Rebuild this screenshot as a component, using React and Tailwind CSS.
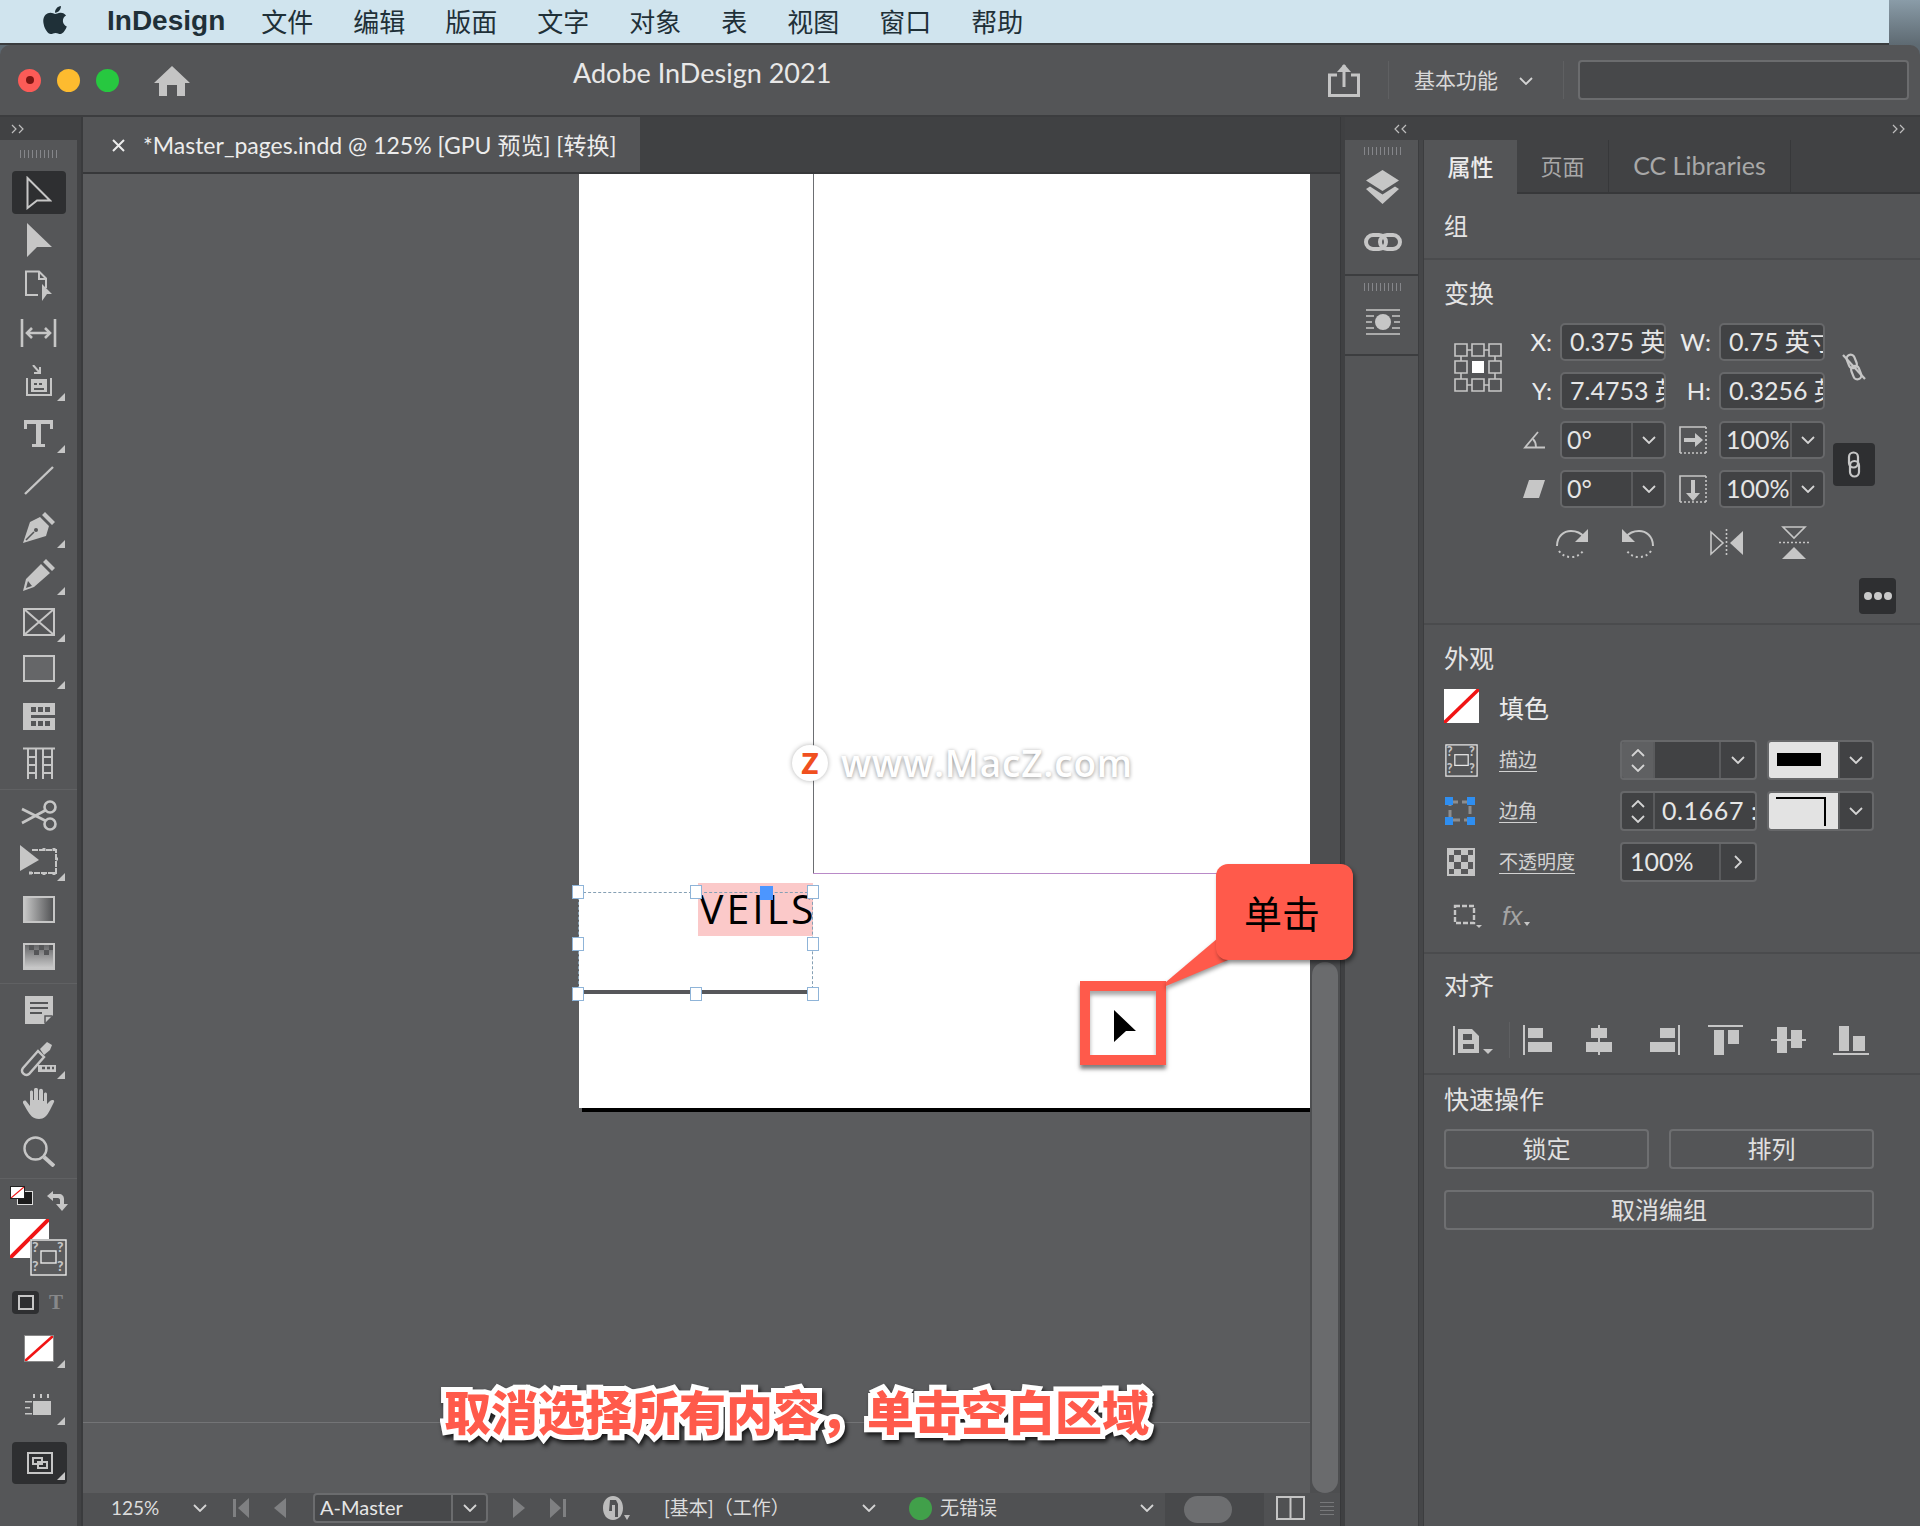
import React from "react";
import { FaApple } from "react-icons/fa";

const C = "#c6c6c6";

const Chevron = ({ className = "", color = "#d4d4d4" }) => (
  <svg viewBox="0 0 14 8" className={`w-[14px] h-[8px] ${className}`} fill="none" stroke={color} strokeWidth="1.8">
    <path d="M1 1l6 6 6-6" />
  </svg>
);

const Collapse = ({ left }) => (
  <svg width="13" height="10" viewBox="0 0 13 10" fill="none" stroke="#bdbdbd" strokeWidth="1.2">
    <path d={left ? "M5 1L1 5l4 4M12 1L8 5l4 4" : "M1 1l4 4-4 4M8 1l4 4-4 4"} />
  </svg>
);

const Gripper = ({ className = "" }) => (
  <div className={`h-[8px] w-[38px] bg-[repeating-linear-gradient(90deg,#85868a_0_1px,transparent_1px_4px)] ${className}`}></div>
);

// little flyout triangle on the tool buttons
const More = () => (
  <svg viewBox="0 0 8 8" className="absolute left-[57px] top-1/2 mt-[12px] w-[8px] h-[8px]" fill={C}>
    <path d="M8 0v8H0z" />
  </svg>
);

const Tool = ({ cls, more, active, children }) => (
  <div className={`relative flex items-center justify-center ${cls}`}>
    {active && <div className="absolute left-[12px] top-[2.5px] w-[54px] h-[43px] rounded bg-[#2e2f31]"></div>}
    <div className="relative flex">{children}</div>
    {more && <More />}
  </div>
);

const Svg = ({ w, h, children, fill = C, stroke = "none", sw = 2 }) => (
  <svg width={w} height={h} viewBox={`0 0 ${w} ${h}`} fill={fill} stroke={stroke} strokeWidth={sw}>
    {children}
  </svg>
);

const Segment = ({ children, className = "" }) => (
  <div className={`flex h-[38px] rounded-[5px] border-2 border-[#67686a] bg-[#414244] overflow-hidden ${className}`}>{children}</div>
);

const TextInput = ({ children }) => (
  <Segment className="items-center pl-[8px] text-[25px] text-[#e6e6e6] whitespace-nowrap">{children}</Segment>
);

const DropInput = ({ children }) => (
  <Segment>
    <div className="flex-1 pl-[5px] text-[25px] leading-[33px] text-[#e6e6e6]">{children}</div>
    <div className="w-[33px] border-l-2 border-[#5a5b5d] flex items-center justify-center">
      <Chevron />
    </div>
  </Segment>
);

const Label = ({ children }) => <div className="text-right text-[24px] leading-[38px] text-[#ececec]">{children}</div>;

const Stepper = ({ dim }) => (
  <div className={`w-[33px] h-full flex flex-col items-center justify-center gap-[7px] border-r-2 border-[#5a5b5d] ${dim ? "bg-[#5f6062]" : ""}`}>
    <Chevron className="rotate-180" />
    <Chevron />
  </div>
);

const SwatchDrop = ({ children }) => (
  <div className="ml-[10px] flex w-[107px] h-[40px] rounded-[4px] border-2 border-[#67686a] bg-[#414244] overflow-hidden">
    <div className="w-[69px] bg-[#e3e3e3] flex items-center justify-center relative">{children}</div>
    <div className="flex-1 flex items-center justify-center border-l-2 border-[#5a5b5d]">
      <Chevron />
    </div>
  </div>
);

const Title = ({ children }) => <div className="text-[25px] leading-[26px] text-[#e4e4e4]">{children}</div>;

const NoneSwatch = ({ className }) => (
  <svg viewBox="0 0 40 40" preserveAspectRatio="none" className={className}>
    <rect width="40" height="40" fill="#fff" />
    <path d="M0 40L40 0" stroke="#f01414" strokeWidth="4" />
  </svg>
);

const StrokeBox = ({ w, h }) => (
  <svg width={w} height={h} viewBox="0 0 37 37">
    <rect x="1" y="1" width="35" height="35" fill="none" stroke="#e8e8e8" strokeWidth="1.4" />
    <rect x="11" y="12" width="15" height="12" fill="#5a5b5d" stroke="#e8e8e8" strokeWidth="1.4" />
    <text x="2" y="13" fontSize="14" fontWeight="900" fill="#c4c4c4">?</text>
    <text x="27" y="13" fontSize="14" fontWeight="900" fill="#c4c4c4">?</text>
    <text x="2" y="32" fontSize="14" fontWeight="900" fill="#c4c4c4">?</text>
    <text x="27" y="32" fontSize="14" fontWeight="900" fill="#c4c4c4">?</text>
  </svg>
);

const Handle = ({ className }) => (
  <div className={`absolute w-[12px] h-[14px] bg-white border border-[#8fb4d8] ${className}`}></div>
);

const MENU = ["文件", "编辑", "版面", "文字", "对象", "表", "视图", "窗口", "帮助"];

const App = () => {
  return (
    <div className="relative w-[1920px] h-[1526px] overflow-hidden flex flex-col bg-[#5e6a72] font-['Lato','Noto_Sans_CJK_SC',sans-serif]">
      {/* Mac menu bar */}
      <div className="h-[45px] shrink-0 flex bg-[#3a3c3e]">
        <div className="flex-1 h-[43px] bg-[#d0e4ee] flex items-center pb-[2px] pl-[40px] text-[#1f3038]">
          <FaApple className="w-[30px] h-[32px] text-[#1f3038] -mt-[2px]" />
          <span className="ml-[37px] mr-[36px] text-[28px] font-bold font-['Liberation_Sans',sans-serif]">InDesign</span>
          <div className="flex gap-[40px] text-[26px] font-['Noto_Sans_CJK_SC',sans-serif]">
            {MENU.map((m) => (
              <span key={m}>{m}</span>
            ))}
          </div>
        </div>
        <div className="w-[31px] h-[45px] bg-gradient-to-b from-[#8a9ca8] to-[#5e6a72]"></div>
      </div>

      <div className="flex-1 flex flex-col rounded-t-[10px] overflow-hidden bg-[#545557]">
        {/* Title bar */}
        <div className="h-[72px] shrink-0 flex items-center border-b-2 border-[#3c3d3f] relative">
          <div className="ml-[18px] w-[23px] h-[23px] rounded-full bg-[#fc5b57] flex items-center justify-center">
            <div className="w-[8px] h-[8px] rounded-full bg-[#7d1512]"></div>
          </div>
          <div className="ml-[16px] w-[23px] h-[23px] rounded-full bg-[#fdbb2f]"></div>
          <div className="ml-[16px] w-[23px] h-[23px] rounded-full bg-[#27c840]"></div>
          <svg viewBox="0 0 36 30" className="ml-[35px] w-[36px] h-[30px] mt-[2px]" fill="#c4c4c4">
            <path d="M18 0L36 17h-5v13h-8V19H13v11H5V17H0z" />
          </svg>
          <div className="ml-[383px] -mt-[14px] text-[27px] text-[#e8e8e8]">Adobe InDesign 2021</div>
          <div className="ml-auto flex items-center">
            <svg width="32" height="34" viewBox="0 0 32 34" fill="none" stroke="#c4c4c4" strokeWidth="3">
              <path d="M9 12H1.5v20.5h29V12H23M16 24V2" />
              <path d="M9 9l7-8 7 8z" fill="#c4c4c4" stroke="none" />
            </svg>
            <div className="ml-[28px] w-[1px] h-[38px] bg-[#5f6062]"></div>
            <span className="ml-[25px] text-[21px] text-[#d8d8d8]">基本功能</span>
            <Chevron className="ml-[21px] mt-[2px]" />
            <div className="ml-[30px] w-[1px] h-[38px] bg-[#5f6062]"></div>
            <div className="ml-[14px] mr-[11px] w-[331px] h-[40px] rounded-[4px] border-2 border-[#6b6c6e] bg-[#47484a]"></div>
          </div>
        </div>

        <div className="flex-1 flex min-h-0">
          {/* Left tools */}
          <div className="w-[77px] shrink-0 flex flex-col bg-[#555658]">
            <div className="h-[23px] shrink-0 bg-[#414244] pl-[11px] flex items-center">
              <Collapse />
            </div>
            <div className="h-[28.5px] shrink-0 flex items-center justify-center">
              <Gripper />
            </div>
            <Tool cls="h-[48px]" active>
              <Svg w={26} h={34} fill="none" stroke={C}><path d="M1.5 2L24 24.5H11L1.5 32z" /></Svg>
            </Tool>
            <Tool cls="h-[47px]">
              <Svg w={26} h={34}><path d="M1 0l25 24H11L1 34z" /></Svg>
            </Tool>
            <Tool cls="h-[45px]">
              <Svg w={29} h={32} fill="none" stroke={C}><path d="M14 25H2V1.5h13l7 7V18M15 2v7h7" /><path d="M18 14l10 10h-5l-5 7z" fill={C} stroke="none" /></Svg>
            </Tool>
            <Tool cls="h-[49px]">
              <Svg w={37} h={28} fill="none" stroke={C} sw={2.6}><path d="M2 0v28M35 0v28M8 14h21" /><path d="M12 9l-5 5 5 5M25 9l5 5-5 5" /></Svg>
            </Tool>
            <Tool cls="h-[47px]" more>
              <Svg w={28} h={32} fill="none" stroke={C}><path d="M8 0l7 8M15 2v6H9" /><path d="M2 13v17h24V13" /><path d="M6 14h16v13H6z" fill={C} stroke="none" /><path d="M9 19h3M14 19h3M9 24h10" stroke="#555658" /></Svg>
            </Tool>
            <Tool cls="h-[57px]" more>
              <Svg w={29} h={27}><path d="M0 0h29v9h-3V4H17v20h4v3H8v-3h4V4H3v5H0z" /></Svg>
            </Tool>
            <Tool cls="h-[38px]">
              <Svg w={30} h={29} fill="none" stroke={C} sw={2.4}><path d="M1 28L29 1" /></Svg>
            </Tool>
            <Tool cls="h-[56px]" more>
              <Svg w={32} h={31}><path d="M22 0l10 10-3 3-10-10zM17 5l9 9-3 10L0 31l7-21z" /><path d="M3 28l8-8" stroke="#555658" strokeWidth="1.6" /><circle cx="13" cy="18" r="2" fill="#555658" /></Svg>
            </Tool>
            <Tool cls="h-[39px]" more>
              <Svg w={32} h={32}><path d="M23 0l9 9-3 3-9-9zM18 5l9 9-16 14-11 4 3-12z" /><path d="M3 29l6-2-4-5z" fill="#555658" /></Svg>
            </Tool>
            <Tool cls="h-[55px]" more>
              <Svg w={32} h={28} fill="none" stroke={C}><path d="M1 1h30v26H1zM1 1l30 26M31 1L1 27" /></Svg>
            </Tool>
            <Tool cls="h-[38px]" more>
              <Svg w={32} h={27} fill="#656668" stroke={C}><path d="M1 1h30v25H1z" /></Svg>
            </Tool>
            <Tool cls="h-[58px]">
              <Svg w={32} h={27}>
                <path d="M0 0h32v27H0z" />
                <path d="M8 4h5v5H8zM15 4h5v5h-5zM22 4h5v5h-5zM8 18h5v5H8zM15 18h5v5h-5zM22 18h5v5h-5zM8 12h24v3H8z" fill="#555658" />
              </Svg>
            </Tool>
            <Tool cls="h-[35px]">
              <Svg w={32} h={32} fill="none" stroke={C}><path d="M0 1.5h32M5 1v31M13 1v31M20 1v31M29 1v31M5 10h8M5 18h8M5 26h8M20 10h9M20 18h9M20 26h9" /></Svg>
            </Tool>
            <div className="h-[9px] shrink-0 border-b border-[#606163]"></div>
            <Tool cls="h-[51px]">
              <Svg w={36} h={31} fill="none" stroke={C} sw={2.6}><circle cx="29" cy="7" r="5.5" /><circle cx="29" cy="24" r="5.5" /><path d="M25 10L1 23M25 21L1 9" /></Svg>
            </Tool>
            <Tool cls="h-[41px]" more>
              <Svg w={38} h={32} fill="none" stroke={C}>
                <path d="M12 5h24v23H12" strokeDasharray="6 1" />
                <path d="M9 28h3M34 3v3M34 27v3M24 3v3M24 27v3M36 14h2" strokeWidth="3" />
                <path d="M0 0l19 15L0 26z" fill={C} stroke="none" />
              </Svg>
            </Tool>
            <Tool cls="h-[55px]">
              <svg width="32" height="27" viewBox="0 0 32 27">
                <defs>
                  <linearGradient id="gr1">
                    <stop offset="0" stopColor="#c8c8c8" />
                    <stop offset="1" stopColor="#4e4f51" />
                  </linearGradient>
                </defs>
                <rect x="1" y="1" width="30" height="25" fill="url(#gr1)" stroke={C} strokeWidth="2" />
              </svg>
            </Tool>
            <Tool cls="h-[39px]">
              <svg width="32" height="27" viewBox="0 0 32 27">
                <defs>
                  <linearGradient id="gr2" x1="0" y1="1" x2="0" y2="0">
                    <stop offset="0" stopColor="#cdcdcd" />
                    <stop offset="1" stopColor="#626365" />
                  </linearGradient>
                </defs>
                <rect x="1" y="1" width="30" height="25" fill="url(#gr2)" stroke={C} strokeWidth="2" />
                <path d="M6 2h5v5H6zM16 2h5v5h-5zM26 2h4v5h-4zM11 7h5v5h-5zM21 7h5v5h-5z" fill="#555658" />
              </svg>
            </Tool>
            <div className="h-[8px] shrink-0 border-b border-[#606163]"></div>
            <Tool cls="h-[52px]">
              <Svg w={28} h={28}><path d="M0 0h28v19l-9 9H0z" /><path d="M5 7h18M5 12h18M5 17h12" stroke="#555658" strokeWidth="2" /><path d="M20 27v-7h7" stroke="#555658" strokeWidth="1.5" fill="none" /></Svg>
            </Tool>
            <Tool cls="h-[46px]" more>
              <Svg w={38} h={36} fill="none" stroke={C} sw={2.4}><path d="M3 27L18 10l6 6L9 33c-4 3-9-2-6-6z" /><path d="M20 8l7-7 5 3-2 5-6 5z" fill={C} stroke="none" /><path d="M18 24h18v7H18z" fill={C} stroke="none" /><path d="M22 27h3M27 27h3M32 27h2" stroke="#555658" /></Svg>
            </Tool>
            <Tool cls="h-[43px]">
              <Svg w={32} h={31}><path d="M16 31c-6 0-9-4-12-9L0 15c-1-2 2-3 3-2l4 5 0-14c0-2 3-2 3 0v8h1V2c0-3 4-3 4 0v10h1V3c0-3 4-3 4 0v10h1V6c0-2 3-2 3 0v10l3-3c2-2 5-1 4 1l-4 8c-3 6-6 9-11 9z" /></Svg>
            </Tool>
            <Tool cls="h-[53px]">
              <Svg w={32} h={31} fill="none" stroke={C} sw={2.4}><circle cx="12.5" cy="12.5" r="11" /><path d="M21 21l10 9" strokeWidth="4" /></Svg>
            </Tool>
            <div className="h-[1px] shrink-0 bg-[#606163]"></div>

            {/* fill and stroke swatches overlap each other */}
            <div className="relative h-[101px] shrink-0">
              <div className="absolute left-[17px] top-[12px] w-[16px] h-[14px] bg-[#1b1b1b] border border-[#ddd]"></div>
              <div className="absolute left-[10px] top-[7px] w-[15px] h-[13px] border border-[#222]">
                <NoneSwatch className="w-full h-full" />
              </div>
              <svg className="absolute left-[47px] top-[12px]" width="21" height="21" viewBox="0 0 21 21" fill={C}>
                <path d="M0 5l6-5v3h6c3 0 5 2 5 5v5h4l-6 7-6-7h4V9c0-1-1-2-2-2H6v3z" />
              </svg>
              <NoneSwatch className="absolute left-[10px] top-[40px] w-[39px] h-[39px]" />
              <div className="absolute left-[30px] top-[60px] bg-[#5a5b5d]">
                <StrokeBox w={37} h={37} />
              </div>
            </div>
            <div className="mt-[11px] h-[23px] shrink-0 flex items-center">
              <div className="ml-[12px] w-[27px] h-[23px] rounded bg-[#2e2f31] flex items-center justify-center">
                <div className="w-[16px] h-[15px] border-2 border-[#c6c6c6]"></div>
              </div>
              <span className="ml-[10px] text-[21px] leading-[21px] font-bold text-[#87888a] font-['Liberation_Serif',serif]">T</span>
            </div>
            <Tool cls="h-[69px]" more>
              <NoneSwatch className="w-[30px] h-[27px] border border-[#888]" />
            </Tool>
            <Tool cls="h-[45px]" more>
              <Svg w={27} h={22}><path d="M8 7h18v14H8zM0 7h7v1.5H0zM0 13h5v1.5H0zM0 19h7v1.5H0zM8 0h2v4H8zM15 0h2v4h-2zM22 0h2v4h-2z" /></Svg>
            </Tool>
            <div className="mt-[14px] ml-[12px] relative w-[55px] h-[42px] rounded bg-[#2e2f31] flex items-center justify-center">
              <Svg w={26} h={22} fill="none" stroke={C}><path d="M1 1h24v20H1zM6 6h9v6H6zM11 10h9v6h-9z" /></Svg>
              <svg viewBox="0 0 8 8" className="absolute right-[2px] bottom-[4px] w-[8px] h-[8px]" fill={C}><path d="M8 0v8H0z" /></svg>
            </div>
          </div>
          <div className="w-[6px] shrink-0 bg-[#414244] border-r-2 border-[#3a3b3d]"></div>

          {/* Document area */}
          <div className="w-[1257px] shrink-0 flex flex-col">
            <div className="h-[57px] shrink-0 flex bg-[#404143] border-b-2 border-[#37383a]">
              <div className="w-[557px] bg-[#535456] flex items-center pt-[2px] text-[23px] text-[#ececec]">
                <svg className="ml-[29px]" width="13" height="13" viewBox="0 0 13 13" stroke="#ececec" strokeWidth="2"><path d="M1 1l11 11M12 1L1 12" /></svg>
                <span className="ml-[18px]">*Master_pages.indd @ 125% [GPU 预览] [转换]</span>
              </div>
            </div>
            <div className="flex-1 flex min-h-0">
              <div className="relative flex-1 bg-[#5b5c5e] overflow-hidden">
                {/* page */}
                <div className="absolute left-[496px] top-0 w-[731px] h-[934px] bg-white shadow-[3px_4px_0_#000]">
                  <div className="absolute left-[234px] top-0 w-[1px] h-[699px] bg-[#6c6e72]"></div>
                  <div className="absolute left-[234px] top-[699px] right-0 h-[1px] bg-[#b98ac8]"></div>

                  <div className="absolute left-[119px] top-[709px] w-[115px] h-[53px] bg-[#fbc9c9]"></div>
                  <div className="absolute left-[120px] top-[706px] text-[41px] leading-[56px] tracking-[3px] text-black font-['Open_Sans',sans-serif]">VEILS</div>

                  {/* selection */}
                  <div className="absolute left-[-1px] top-[718px] w-[235px] h-[102px] border border-dashed border-[#86a0b4]"></div>
                  <div className="absolute left-[-1px] top-[816px] w-[235px] h-[4px] bg-[#56575a]"></div>
                  <Handle className="left-[-7px] top-[711px]" />
                  <Handle className="left-[111px] top-[711px]" />
                  <Handle className="left-[228px] top-[711px]" />
                  <Handle className="left-[-7px] top-[763px]" />
                  <Handle className="left-[228px] top-[763px]" />
                  <Handle className="left-[-7px] top-[813px]" />
                  <Handle className="left-[111px] top-[813px]" />
                  <Handle className="left-[228px] top-[813px]" />
                  <div className="absolute left-[181px] top-[712px] w-[13px] h-[14px] bg-[#4c96ff]"></div>
                </div>

                {/* watermark */}
                <div className="absolute left-[709px] top-[569px] flex items-center">
                  <div className="w-[36px] h-[36px] rounded-full bg-white shadow-[0_0_5px_rgba(0,0,0,0.3)] flex items-center justify-center text-[28px] font-extrabold leading-none text-[#f0501f]">Z</div>
                  <span className="ml-[13px] text-[37px] leading-[40px] font-semibold tracking-[0.8px] text-white [text-shadow:0_1px_4px_rgba(0,0,0,0.45)] font-['Open_Sans',sans-serif]">www.MacZ.com</span>
                </div>

                <div className="absolute left-0 right-0 top-[1248px] h-[1px] bg-[#737476]"></div>
              </div>
              {/* scrollbar */}
              <div className="w-[30px] shrink-0 flex flex-col bg-[#4d4e50] pt-[788px]">
                <div className="ml-[2px] w-[26px] h-[531px] rounded-full bg-[#6a6b6d]"></div>
              </div>
            </div>
            {/* Status bar */}
            <div className="h-[33px] shrink-0 flex items-center pb-[3px] bg-[#505153] text-[#dcdcdc]">
              <span className="ml-[28px] w-[82px] text-[19px] leading-[26px]">125%</span>
              <Chevron />
              <svg className="ml-[26px]" width="16" height="20" viewBox="0 0 16 20" fill="#7f8082"><path d="M0 1h3v18H0zM16 0v20L5 10z" /></svg>
              <svg className="ml-[25px]" width="12" height="20" viewBox="0 0 12 20" fill="#7f8082"><path d="M12 0v20L0 10z" /></svg>
              <div className="ml-[27px] w-[175px] h-[30px] flex rounded-[4px] border-2 border-[#6b6c6e] bg-[#47484a]">
                <span className="ml-[5px] flex-1 text-[20px] leading-[24px] text-[#e6e6e6]">A-Master</span>
                <div className="w-[35px] border-l-2 border-[#6b6c6e] flex items-center justify-center">
                  <Chevron />
                </div>
              </div>
              <svg className="ml-[25px]" width="12" height="20" viewBox="0 0 12 20" fill="#7f8082"><path d="M0 0v20l12-10z" /></svg>
              <svg className="ml-[25px]" width="16" height="20" viewBox="0 0 16 20" fill="#7f8082"><path d="M13 1h3v18h-3zM0 0v20l11-10z" /></svg>
              <svg className="ml-[36px]" width="28" height="26" viewBox="0 0 28 26" fill="#bcbcbc"><path d="M11 1C5 1 1 6 1 13s4 12 10 12 10-5 10-12S17 1 11 1zM8 5h6l2 4v13h-3V10h-3v6H7z" fillRule="evenodd" /><path d="M22 20h6l-3 5z" /></svg>
              <span className="ml-[34px] w-[198px] text-[19px] leading-[26px] text-[#dcdcdc]">[基本]（工作）</span>
              <Chevron />
              <div className="ml-[33px] w-[23px] h-[23px] rounded-full bg-[#41a04a]"></div>
              <span className="ml-[8px] w-[200px] text-[19px] leading-[26px]">无错误</span>
              <Chevron />
              <div className="ml-[11px] w-[99px] h-[33px] -mb-[3px] bg-[#48494b] flex items-center">
                <div className="ml-[19px] w-[48px] h-[27px] rounded-full bg-[#6d6e70]"></div>
              </div>
              <svg className="ml-[12px]" width="29" height="24" viewBox="0 0 29 24" fill="none" stroke="#c4c4c4" strokeWidth="2"><path d="M1 1h27v22H1zM14.5 1v22" /></svg>
              <div className="ml-[15px] w-[14px] h-[14px] bg-[repeating-linear-gradient(0deg,#77787a_0_1px,transparent_1px_4px)]"></div>
            </div>
          </div>

          <div className="w-[5px] shrink-0 bg-[#3f4042] border-l border-[#37383a]"></div>

          {/* Right dock */}
          <div className="flex-1 flex flex-col min-w-0">
            <div className="h-[23px] shrink-0 flex justify-between items-center bg-[#414244] pl-[49px] pr-[15px]">
              <Collapse left />
              <Collapse />
            </div>
            <div className="flex-1 flex min-h-0">
              {/* Icon strip */}
              <div className="w-[73px] shrink-0 flex flex-col">
                <div className="h-[136px] pl-[2px] border-b-2 border-[#3c3d3f] flex flex-col items-center">
                  <Gripper className="mt-[7px]" />
                  <svg className="mt-[15px]" width="33" height="34" viewBox="0 0 33 34" fill={C}><path d="M16.5 0L33 10.5 16.5 21 0 10.5zM0 19l4-2.5 12.5 8 12.5-8 4 2.5-16.5 15z" /></svg>
                  <svg className="mt-[29px]" width="38" height="18" viewBox="0 0 38 18" fill="none" stroke={C} strokeWidth="4"><rect x="2" y="2" width="20" height="14" rx="7" /><rect x="16" y="2" width="20" height="14" rx="7" /></svg>
                </div>
                <div className="h-[80px] pl-[2px] border-b-2 border-[#3c3d3f] flex flex-col items-center">
                  <Gripper className="mt-[7px]" />
                  <svg className="mt-[18px]" width="34" height="26" viewBox="0 0 34 26" stroke={C} strokeWidth="1.4" fill="none"><path d="M0 1h34M0 7h8M26 7h8M0 13h6M28 13h6M0 19h8M26 19h8M0 25h34" /><circle cx="17" cy="13" r="8" fill={C} stroke="none" /></svg>
                </div>
              </div>
              <div className="w-[6px] shrink-0 bg-[#454648] border-x border-[#3c3d3f]"></div>

              {/* Properties panel */}
              <div className="flex-1 min-w-0 flex flex-col bg-[#545557]">
                <div className="h-[54px] shrink-0 flex bg-[#414244] border-b-2 border-[#37383a]">
                  <div className="w-[93px] -mb-[2px] bg-[#545557] flex items-center justify-center text-[23px] font-medium text-[#ececec]">属性</div>
                  <div className="w-[92px] flex items-center justify-center border-r border-[#37383a] text-[22px] text-[#a8a8a8]">页面</div>
                  <div className="w-[182px] flex items-center justify-center border-r border-[#37383a] text-[25px] text-[#a8a8a8]">CC Libraries</div>
                </div>
                <div className="h-[66px] shrink-0 flex items-center pl-[20px] border-b-2 border-[#4a4b4d] text-[24px] text-[#e4e4e4]">组</div>

                {/* Transform */}
                <div className="h-[365px] shrink-0 pl-[20px] pt-[20px] border-b-2 border-[#4a4b4d]">
                  <Title>变换</Title>
                  <div className="mt-[17px] flex">
                    <svg className="ml-[10px] mt-[20px] shrink-0" width="48" height="49" viewBox="0 0 48 49" fill="none" stroke={C} strokeWidth="1.6">
                      <path d="M1 1h12v12H1zM18 1h12v12H18zM35 1h12v12H35zM1 18h12v12H1zM35 18h12v12H35zM1 36h12v12H1zM18 36h12v12H18zM35 36h12v12H35z" />
                      <path d="M13 7h5M30 7h5M13 42h5M30 42h5M7 13v5M7 30v6M41 13v5M41 30v6" />
                      <rect x="18" y="18" width="12" height="12" fill="#fff" stroke="none" />
                    </svg>
                    <div className="grid grid-cols-[50px_106px_37px_106px_42px] auto-rows-[38px] gap-x-[8px] gap-y-[11px]">
                      <Label>X:</Label>
                      <TextInput>0.375 英</TextInput>
                      <Label>W:</Label>
                      <TextInput>0.75 英寸</TextInput>
                      <div className="row-span-2 flex items-center justify-center">
                        <svg width="26" height="30" viewBox="0 0 26 30" fill="none" stroke={C} strokeWidth="2.2">
                          <g transform="rotate(-22 13 15)">
                            <rect x="9" y="2" width="8" height="14" rx="4" />
                            <rect x="9" y="14" width="8" height="14" rx="4" />
                          </g>
                          <path d="M2 3l22 24" />
                        </svg>
                      </div>
                      <Label>Y:</Label>
                      <TextInput>7.4753 英</TextInput>
                      <Label>H:</Label>
                      <TextInput>0.3256 英</TextInput>
                      <div className="flex items-center justify-end pr-[7px]">
                        <svg width="22" height="18" viewBox="0 0 22 18" fill="none" stroke={C} strokeWidth="1.8"><path d="M15 1L2 16.500h20" /><path d="M10 8c2 2 3 5 3 8" /></svg>
                      </div>
                      <DropInput>0°</DropInput>
                      <div className="flex items-center justify-center">
                        <svg width="28" height="28" viewBox="0 0 28 28" fill="none" stroke={C} strokeWidth="1.6"><path d="M27 1H1v26" /><path d="M27 27V1" strokeDasharray="2 2" /><path d="M1 27h26" strokeDasharray="2 2" /><path d="M5 12h11V7l8 7-8 7v-5H5z" fill={C} stroke="none" /></svg>
                      </div>
                      <DropInput>100%</DropInput>
                      <div className="row-span-2 flex items-center justify-center">
                        <div className="w-[42px] h-[43px] rounded bg-[#2e2f31] flex items-center justify-center">
                          <svg width="14" height="27" viewBox="0 0 14 27" fill="none" stroke={C} strokeWidth="2.2"><rect x="2" y="1.500" width="9" height="15" rx="4.500" /><rect x="3" y="10" width="9" height="15.500" rx="4.500" /></svg>
                        </div>
                      </div>
                      <div className="flex items-center justify-end pr-[7px]">
                        <svg width="22" height="18" viewBox="0 0 22 18" fill={C}><path d="M6 0h16l-6 18H0z" /></svg>
                      </div>
                      <DropInput>0°</DropInput>
                      <div className="flex items-center justify-center">
                        <svg width="28" height="28" viewBox="0 0 28 28" fill="none" stroke={C} strokeWidth="1.6"><path d="M1 27V1h26" /><path d="M27 1v26" strokeDasharray="2 2" /><path d="M1 27h26" strokeDasharray="2 2" /><path d="M12 5h4v13h5l-7 8-7-8h5z" fill={C} stroke="none" /></svg>
                      </div>
                      <DropInput>100%</DropInput>
                    </div>
                  </div>
                  <div className="mt-[19px] flex items-center h-[31px] text-[0px]">
                    <svg className="ml-[112px]" width="32" height="31" viewBox="0 0 32 31" fill="none" stroke={C} strokeWidth="2">
                      <path d="M1 19C1 9 8 4 15 4c6 0 10 2 13 6" />
                      <path d="M32 2v13H19z" fill={C} stroke="none" />
                      <path d="M3 24c3 4 7 6 12 6s9-2 12-6" strokeDasharray="2 3" />
                    </svg>
                    <svg className="ml-[34px]" width="32" height="31" viewBox="0 0 32 31" fill="none" stroke={C} strokeWidth="2">
                      <path d="M31 19C31 9 24 4 17 4 11 4 7 6 4 10" />
                      <path d="M0 2v13h13z" fill={C} stroke="none" />
                      <path d="M29 24c-3 4-7 6-12 6s-9-2-12-6" strokeDasharray="2 3" />
                    </svg>
                    <svg className="ml-[56px]" width="33" height="28" viewBox="0 0 33 28" fill="none" stroke={C} strokeWidth="1.6">
                      <path d="M1 3l12 11L1 25z" />
                      <path d="M16.5 0v28" strokeDasharray="2 2" />
                      <path d="M33 2v24L20 14z" fill={C} stroke="none" />
                    </svg>
                    <svg className="ml-[36px]" width="30" height="33" viewBox="0 0 30 33" fill="none" stroke={C} strokeWidth="1.6">
                      <path d="M4 1h22L15 12z" />
                      <path d="M0 16.5h30" strokeDasharray="2 2" />
                      <path d="M3 33h24L15 21z" fill={C} stroke="none" />
                    </svg>
                  </div>
                  <div className="mt-[20px] mr-[24px] flex justify-end">
                    <div className="w-[37px] h-[36px] rounded bg-[#2e2f31] flex items-center justify-center gap-[2px]">
                      <div className="w-[8px] h-[8px] rounded-full bg-[#c9c9c9]"></div>
                      <div className="w-[8px] h-[8px] rounded-full bg-[#c9c9c9]"></div>
                      <div className="w-[8px] h-[8px] rounded-full bg-[#c9c9c9]"></div>
                    </div>
                  </div>
                </div>

                {/* Appearance */}
                <div className="h-[329px] shrink-0 pl-[20px] pt-[20px] border-b-2 border-[#4a4b4d]">
                  <Title>外观</Title>
                  <div className="mt-[18px] h-[34px] flex items-center">
                    <NoneSwatch className="w-[35px] h-[34px]" />
                    <span className="ml-[20px] pt-[6px] text-[25px] text-[#ececec]">填色</span>
                  </div>
                  <div className="mt-[17px] h-[40px] flex items-center">
                    <div className="w-[55px] pl-[1px] bg-transparent"><StrokeBox w={33} h={33} /></div>
                    <span className="w-[121px] text-[19px] underline underline-offset-4 text-[#d2d2d2]">描边</span>
                    <div className="flex w-[137px] h-[40px] rounded-[4px] border-2 border-[#67686a] bg-[#414244] overflow-hidden">
                      <Stepper dim />
                      <div className="flex-1 border-r-2 border-[#5a5b5d]"></div>
                      <div className="w-[34px] flex items-center justify-center"><Chevron /></div>
                    </div>
                    <SwatchDrop>
                      <div className="absolute left-[8px] top-[11px] w-[44px] h-[13px] bg-black"></div>
                    </SwatchDrop>
                  </div>
                  <div className="mt-[11px] h-[40px] flex items-center">
                    <div className="w-[55px] pl-[1px]">
                      <svg width="30" height="28" viewBox="0 0 30 28">
                        <path d="M5 5h20v18H5z" fill="none" stroke="#8c8d8f" strokeWidth="3" strokeDasharray="8 4" />
                        <path d="M0 0h8v8H0zM22 0h8v8h-8zM0 20h8v8H0zM22 20h8v8h-8z" fill="#2f8ef0" />
                      </svg>
                    </div>
                    <span className="w-[121px] text-[19px] underline underline-offset-4 text-[#d2d2d2]">边角</span>
                    <div className="flex w-[137px] h-[40px] rounded-[4px] border-2 border-[#67686a] bg-[#414244] overflow-hidden">
                      <Stepper />
                      <div className="flex-1 pl-[7px] text-[25px] leading-[34px] tracking-[0.6px] whitespace-nowrap overflow-hidden text-[#e6e6e6]">0.1667 :</div>
                    </div>
                    <SwatchDrop>
                      <svg className="absolute left-[3px] top-[3px]" width="55" height="30" viewBox="0 0 55 30" fill="none" stroke="#000" strokeWidth="2"><path d="M4 2h49v28" /></svg>
                    </SwatchDrop>
                  </div>
                  <div className="mt-[11px] h-[40px] flex items-center">
                    <div className="w-[55px] pl-[3px]">
                      <svg width="28" height="28" viewBox="0 0 28 28">
                        <rect width="28" height="28" fill="#c4c4c4" />
                        <path d="M7 2h7v5H7zM21 2h5v5h-5zM2 7h5v7H2zM14 7h7v7h-7zM7 14h7v7H7zM21 14h5v7h-5zM2 21h5v5H2zM14 21h7v5h-7z" fill="#59595b" />
                      </svg>
                    </div>
                    <span className="w-[121px] text-[19px] underline underline-offset-4 text-[#d2d2d2]">不透明度</span>
                    <div className="flex w-[137px] h-[40px] rounded-[4px] border-2 border-[#67686a] bg-[#414244]">
                      <div className="flex-1 pl-[8px] text-[25px] leading-[34px] text-[#e6e6e6]">100%</div>
                      <div className="w-[36px] border-l-2 border-[#5a5b5d] flex items-center justify-center">
                        <Chevron className="-rotate-90" />
                      </div>
                    </div>
                  </div>
                  <div className="mt-[22px] flex items-center h-[24px]">
                    <svg className="ml-[9px]" width="29" height="24" viewBox="0 0 29 24" fill="none" stroke={C} strokeWidth="2.4">
                      <path d="M2 2h19v17H2z" strokeDasharray="5 2" />
                      <path d="M23 21h6l-3 3z" fill={C} stroke="none" />
                    </svg>
                    <span className="ml-[20px] text-[26px] leading-[24px] italic text-[#a4a4a4] font-['Liberation_Sans',sans-serif]">fx</span>
                    <svg className="ml-[2px] mt-[16px]" width="6" height="4" viewBox="0 0 6 4" fill={C}><path d="M0 0h6L3 4z" /></svg>
                  </div>
                </div>

                {/* Align */}
                <div className="h-[121px] shrink-0 pl-[20px] pt-[18px] border-b-2 border-[#4a4b4d]">
                  <Title>对齐</Title>
                  <div className="mt-[24px] flex items-center h-[36px]">
                    <svg className="ml-[9px]" width="40" height="29" viewBox="0 0 40 29" fill={C}>
                      <path d="M0 0h2v29H0zM5 3h14l7 7v17H5z" /><path d="M10 8h9v6h-9zM10 18h11v5H10z" fill="#545557" /><path d="M30 23h10l-5 5z" />
                    </svg>
                    <div className="ml-[16px] w-[1px] h-[36px] bg-[#5f6062]"></div>
                    <svg className="ml-[13px]" width="29" height="30" viewBox="0 0 29 30" fill={C}><path d="M0 0h2v30H0zM5 3h15v10H5zM5 17h24v10H5z" /></svg>
                    <svg className="ml-[34px]" width="26" height="30" viewBox="0 0 26 30" fill={C}><path d="M12 0h2v30h-2zM5 3h16v10H5zM0 17h26v10H0z" /></svg>
                    <svg className="ml-[38px]" width="30" height="30" viewBox="0 0 30 30" fill={C}><path d="M28 0h2v30h-2zM10 3h15v10H10zM0 17h25v10H0z" /></svg>
                    <svg className="ml-[28px]" width="35" height="30" viewBox="0 0 35 30" fill={C}><path d="M0 0h35v2H0zM6 5h10v25H6zM20 5h11v14H20z" /></svg>
                    <svg className="ml-[28px]" width="35" height="26" viewBox="0 0 35 26" fill={C}><path d="M0 12h35v2H0zM6 0h10v26H6zM20 3h11v18H20z" /></svg>
                    <svg className="ml-[27px]" width="36" height="30" viewBox="0 0 36 30" fill={C}><path d="M0 28h36v2H0zM6 1h10v25H6zM20 11h12v15H20z" /></svg>
                  </div>
                </div>

                {/* Quick actions */}
                <div className="flex-1 pl-[20px] pr-[46px] pt-[11px]">
                  <Title>快速操作</Title>
                  <div className="mt-[17px] grid grid-cols-2 gap-x-[20px] gap-y-[21px] text-[24px] text-[#e0e0e0]">
                    <div className="h-[40px] rounded-[4px] border-2 border-[#6e6f71] flex items-center justify-center">锁定</div>
                    <div className="h-[40px] rounded-[4px] border-2 border-[#6e6f71] flex items-center justify-center">排列</div>
                    <div className="col-span-2 h-[40px] rounded-[4px] border-2 border-[#6e6f71] flex items-center justify-center">取消编组</div>
                  </div>
                </div>
              </div>
            </div>
          </div>
        </div>
      </div>

      {/* Tutorial annotations on top of the screenshot */}
      <div className="absolute left-[1080px] top-[981px] w-[86px] h-[84px] border-[10px] border-[#ff5a4b] shadow-[0_4px_4px_rgba(0,0,0,0.5),inset_0_4px_4px_rgba(0,0,0,0.35)]">
        <svg className="absolute left-[24px] top-[19px]" width="22" height="32" viewBox="0 0 22 32" fill="#000"><path d="M0 0l22 21-10 0-12 11z" /></svg>
      </div>
      <svg className="absolute left-[1160px] top-[930px] [filter:drop-shadow(0_3px_2px_rgba(0,0,0,0.4))]" width="80" height="60" viewBox="0 0 80 60" fill="#ff5a4b">
        <path d="M58 8L6 52v4L68 30z" />
      </svg>
      <div className="absolute left-[1216px] top-[864px] w-[137px] h-[96px] pr-[5px] rounded-[12px] bg-[#ff5a4b] shadow-[2px_3px_4px_rgba(0,0,0,0.45)] flex items-center justify-center text-[38px] leading-none text-black font-['Noto_Sans_CJK_SC',sans-serif]">单击</div>
      <div className="absolute left-[444px] top-[1380px] text-[47px] leading-[60px] font-black whitespace-nowrap text-[#ff5a4b] [-webkit-text-stroke:10px_white] [paint-order:stroke_fill] [filter:drop-shadow(2px_3px_2px_rgba(0,0,0,0.75))] font-['Noto_Sans_CJK_SC',sans-serif]">取消选择所有内容，单击空白区域</div>
    </div>
  );
};

export default App;
